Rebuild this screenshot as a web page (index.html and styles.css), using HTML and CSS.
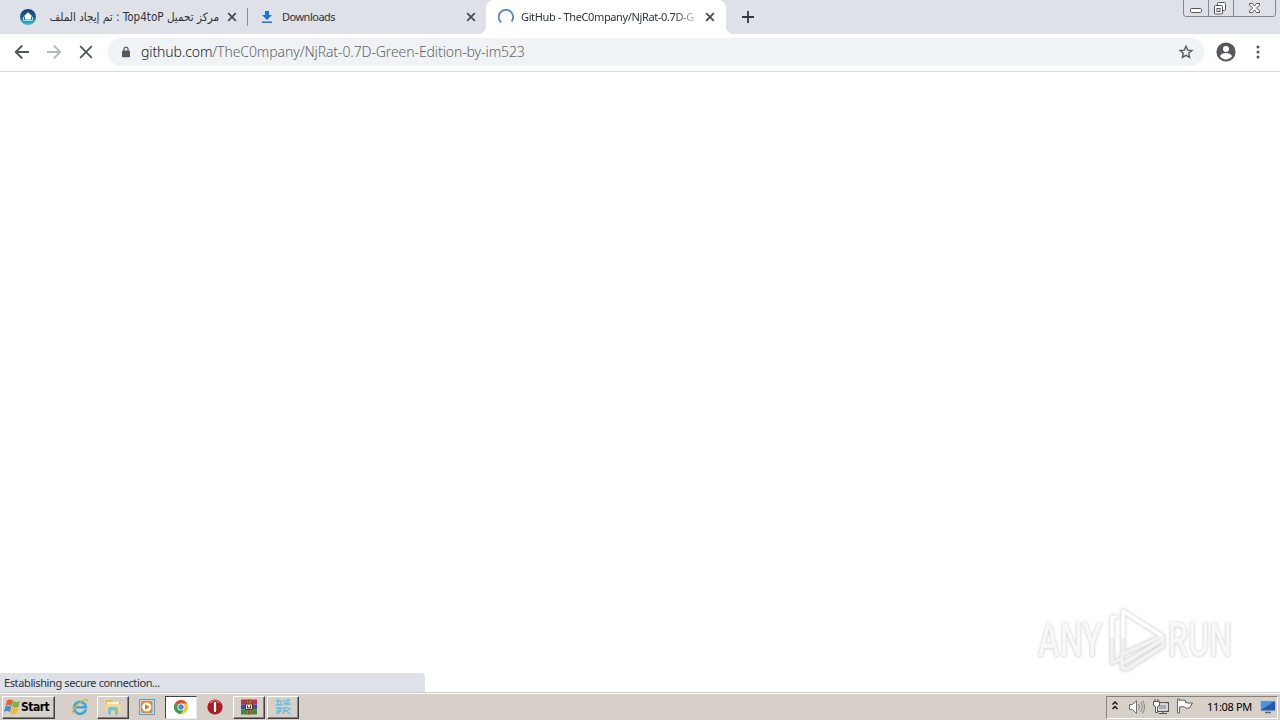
FILE: index.html
```html
<!DOCTYPE html>
<html lang="en">
<head>
<meta charset="utf-8">
<title>GitHub - TheC0mpany/NjRat-0.7D-Green-Edition-by-im523</title>
<link rel="stylesheet" href="styles.css">
</head>
<body>
<div class="screen">
  <header class="tabs">
    <div class="tab tab-first">
      <svg class="fav" viewBox="0 0 16 16"><defs><linearGradient id="fg" x1="0" y1="0" x2="0" y2="1"><stop offset="0" stop-color="#153d70"/><stop offset=".5" stop-color="#1b6090"/><stop offset="1" stop-color="#42c3cf"/></linearGradient></defs><circle cx="8" cy="8" r="8" fill="url(#fg)"/><path d="M8 3.300 12.500 7.500H11V10.500H5V7.500H3.500z" fill="#fff"/><path d="M3.500 8v3.500h9V8" fill="none" stroke="#a8dce8" stroke-width="1"/></svg>
      <span class="title title-ar" dir="rtl">مركز تحميل Top4toP : تم إيجاد الملف</span>
      <svg class="close" viewBox="0 0 10 10"><path d="M1.2 1.2l7.6 7.6M8.8 1.2 1.2 8.8"/></svg>
    </div>
    <div class="tab tab-second">
      <svg class="fav" viewBox="0 0 16 16"><path d="M6 2h4v4h3L8 11 3 6h3zM3 12.4h10v1.6H3z" fill="#1a73d8"/></svg>
      <span class="title title-dl">Downloads</span>
      <svg class="close" viewBox="0 0 10 10"><path d="M1.2 1.2l7.6 7.6M8.8 1.2 1.2 8.8"/></svg>
    </div>
    <div class="tab tab-active">
      <svg class="fav" viewBox="0 0 16 16"><path d="M3.2 13.5A7.2 7.2 0 1 1 13.6 12.5" fill="none" stroke="#5d84c4" stroke-width="1.8"/></svg>
      <span class="title title-gh">GitHub - TheC0mpany/NjRat-0.7D-G</span>
      <svg class="close" viewBox="0 0 10 10"><path d="M1.2 1.2l7.6 7.6M8.8 1.2 1.2 8.8"/></svg>
    </div>
    <svg class="plus" viewBox="0 0 12 12"><path d="M6 0v12M0 6h12" stroke="#34373b" stroke-width="1.8"/></svg>
    <div class="controls">
      <svg viewBox="0 0 93 17"><path d="M.5 0V14Q.5 16.500 3 16.500H90Q92.500 16.500 92.500 14V0M25.500 0V16M50.500 0V16" fill="none" stroke="#85888f"/><g fill="#fff" stroke="#54575e"><rect x="7.500" y="8.500" width="11" height="4" rx="1"/><rect x="34.500" y="2.500" width="8" height="8" rx="1"/><rect x="31.500" y="5.500" width="8" height="8.500" rx="1"/><rect x="34" y="8.500" width="3" height="3"/><path d="M66.500 3.500h3l2 2.500 2-2.500h3v1.500l-3 3 3 3v1.500h-3l-2-2.500-2 2.500h-3V11l3-3-3-3z"/></g></svg>
    </div>
  </header>

  <nav class="toolbar">
    <svg class="nav" viewBox="0 0 16 16"><path d="M15 8H2M8.200 1.500 1.700 8l6.500 6.500" stroke="#505357"/></svg>
    <svg class="nav" viewBox="0 0 16 16"><path d="M1 8h13M7.800 1.500 14.300 8l-6.500 6.500" stroke="#b7b9bb"/></svg>
    <svg class="nav" viewBox="0 0 16 16"><path d="M2.200 2.200l11.600 11.600M13.800 2.200 2.200 13.800" stroke="#505357"/></svg>
    <div class="address">
      <svg class="lock" viewBox="0 0 10 12"><rect x="1" y="4.500" width="8" height="6.700" rx="1" fill="#55585c"/><path d="M3 5V3.200a2 2 0 0 1 4 0V5" fill="none" stroke="#55585c" stroke-width="1.200"/></svg>
      <span class="url"><span class="host">github.com</span>/TheC0mpany/NjRat-0.7D-Green-Edition-by-im523</span>
      <svg class="star" viewBox="0 0 16 16"><path d="M8 2.200l1.700 3.900 4.200.4-3.200 2.800.9 4.100L8 11.300l-3.600 2.100.9-4.100-3.200-2.800 4.200-.4z" fill="none" stroke="#55585c" stroke-width="1.400"/></svg>
    </div>
    <svg class="avatar" viewBox="0 0 20 20"><circle cx="10" cy="10" r="9.600" fill="#54575b"/><circle cx="10" cy="7" r="3" fill="#fff"/><path d="M4 14.200c.8-2 3.600-3.100 6-3.100s5.200 1.100 6 3.100a7.200 7.200 0 0 1-12 0z" fill="#fff"/></svg>
    <svg class="dots" viewBox="0 0 4 14"><g fill="#505357"><circle cx="2" cy="2" r="1.500"/><circle cx="2" cy="7" r="1.500"/><circle cx="2" cy="12" r="1.500"/></g></svg>
  </nav>

  <main class="page">
    <div class="status">Establishing secure connection...</div>
    <div class="watermark">
      <span class="mark mark-any">ANY</span>
      <svg class="play" viewBox="0 0 58 64"><g fill="none" stroke-linejoin="round"><path d="M9 8 4 10v45l9-4M15 3v43L54 28z M14 46v14l5 1 36-23V29M16 55 54 32" stroke="#e6e6e6" stroke-width="4.500"/><path d="M9 8 4 10v45l9-4M15 3v43L54 28z M14 46v14l5 1 36-23V29M16 55 54 32" stroke="#f3f3f3" stroke-width="2.800"/><path d="M9 8 4 10v20M15 30V3l39 25" stroke="#fff" stroke-width="3.400"/></g></svg>
      <span class="mark mark-run">RUN</span>
    </div>
  </main>

  <footer class="taskbar">
    <div class="start">
      <svg class="flag" viewBox="0 0 18 16"><path d="M4 1.500q3-2 6 0L8.500 7q-3-2-6 0z" fill="#e9602c"/><path d="M10.500 2q3 2 6.500 0L15.500 7.500q-3 2-6.500 0z" fill="#75b743"/><path d="M2.300 7.700q3-2 6 0L7 13q-3-2-6 0z" fill="#3b8ed8"/><path d="M8.800 8.300q3 2 6.500 0L14 14q-3 2-6.500 0z" fill="#f5b82e"/></svg>
      <span class="start-label">Start</span>
    </div>
    <div class="task task-ie"><svg viewBox="0 0 18 18"><path d="M14.800 11.500A6 6 0 1 1 15 9.300H4" fill="none" stroke="#3ba7df" stroke-width="2.600"/><path d="M2 15.500C-.5 14 5 6.500 11 3c4-2.300 6-2 5.500.8" fill="none" stroke="#e3b52e" stroke-width="1.300"/></svg></div>
    <div class="task raised"><svg viewBox="0 0 18 18"><path d="M2 2h6l1 2h7v10H2z" fill="#e5c25c"/><path d="M3 4h12v3H3z" fill="#fff6c6"/><path d="M1.500 6h15v9h-15z" fill="#f3da85"/><path d="M4 16.500V11q0-2 2-2h6q2 0 2 2v5.500h-3v-4H7v4z" fill="#79bddd"/></svg></div>
    <div class="task"><svg viewBox="0 0 18 18"><rect x="1.500" y="1.500" width="15" height="15" fill="#b9d9ed" stroke="#5c9fc8"/><rect x="3" y="3" width="11.500" height="12" rx="2" fill="#ef8421"/><circle cx="8.700" cy="9" r="4.600" fill="#fff"/><path d="M7 6.200 11.700 9 7 11.800z" fill="#e36e16"/></svg></div>
    <div class="task pressed"><svg viewBox="0 0 18 18"><circle cx="9" cy="9" r="7" fill="#f5c52d"/><path d="M9 9 2.900 5.500A7 7 0 0 1 15.100 5.500H9z" fill="#df4938"/><path d="M9 9 2.900 5.500A7 7 0 0 0 9 16l3-5.500z" fill="#3a9d55"/><circle cx="9" cy="9" r="3.600" fill="#fff"/><circle cx="9" cy="9" r="2.700" fill="#4787e8"/></svg></div>
    <div class="task"><svg viewBox="0 0 18 18"><circle cx="9" cy="9" r="7.600" fill="#b51820"/><path d="M3 5.500a7 7 0 0 1 12 0q-6-2-12 0z" fill="#d86b69"/><rect x="7.200" y="3.500" width="3.600" height="11" rx="1.600" fill="#fff" stroke="#7d0b10"/></svg></div>
    <div class="task raised"><svg viewBox="0 0 18 18"><path d="M1 1.500h16v5H1z" fill="#b5364a"/><path d="M1 6.500h16v5H1z" fill="#3b4fa4"/><path d="M1 11.500h16v5H1z" fill="#3f8b3d"/><path d="M7 1h4v16H7z" fill="#bb713a"/><path d="M5.500 6h7v5.500h-7z" fill="#eee6cf" stroke="#5a3424"/><path d="M7.500 7.500v2.500h3V7.500M9 2v3M9 12.500v3" fill="none" stroke="#4e3426"/></svg></div>
    <div class="task raised"><svg viewBox="0 0 18 18"><g fill="none" stroke="#65bfe0" stroke-width="1.300"><path d="M2 3h5v4H2M4 1v7M9 2l3 2-3 3M12 2h4M14 2v5M11 6h6M2 10h5v3H3v3M5 9v7M8 10h3l-2 6M12 9l4 2-4 2 5 3M9 13h4"/></g></svg></div>
    <div class="tray">
      <svg class="chev" viewBox="0 0 8 10"><path d="M1.500 3.500 4 1l2.500 2.500M1.500 8 4 5.500 6.500 8" fill="none" stroke="#111" stroke-width="1.400"/></svg>
      <svg class="ti" viewBox="0 0 18 18"><path d="M1.500 6.500h3l4-4v13l-4-4h-3z" fill="#fff" stroke="#707070"/><path d="M10.500 6q2 3 0 6M12.500 4q3.500 5 0 10M14.500 2.500q4 6.500 0 13" fill="none" stroke="#858585"/></svg>
      <svg class="ti" viewBox="0 0 18 18"><rect x="4.500" y="4.500" width="12" height="9" fill="#aaa" stroke="#555"/><path d="M6 6h9v6H6z" fill="#aaa" stroke="#fff"/><path d="M7 15.500h8M11 13.500v2" stroke="#555"/><path d="M1.500 3.500h6v4l-2 1v6h-2v-6l-2-1zM3 1v2.500M6 1v2.500" fill="#fff" stroke="#555"/></svg>
      <svg class="ti" viewBox="0 0 18 18"><path d="M3.500 2.500q3-1 6 0v2q3 1 7 .5l-3 5q-3 1-5-1-2-1-5 0v6h-2v-14h2z" fill="#fff" stroke="#606060"/></svg>
      <span class="clock">11:08 PM</span>
      <svg class="desk" viewBox="0 0 16 14"><rect x=".5" y="1" width="15" height="10" fill="#2658ae" stroke="#b5c8de"/><path d="M1 10V2h12z" fill="#4b91dc"/><path d="M5 12.500h6" stroke="#556581" stroke-width="1.500"/></svg>
    </div>
  </footer>
</div>
</body>
</html>
```
FILE: styles.css
```css
* { box-sizing: border-box; }
body { margin: 0; font-family: "DejaVu Sans Condensed", "DejaVu Sans", sans-serif; }
svg { display: block; flex: none; }
.screen { width: 1280px; height: 720px; display: flex; flex-direction: column; overflow: hidden; background: #fff; }

.tabs { height: 34px; flex: none; display: flex; background: #dee1e8; }
.tab { height: 34px; display: flex; align-items: center; flex: none; }
.tab-first { width: 248px; padding-left: 20px; background: linear-gradient(#888b91, #888b91) right 8px / 1px 18px no-repeat; }
.tab-second { width: 238px; padding-left: 11px; }
.tab-active { width: 240px; padding-left: 12px; background: #fff; border-radius: 8px 8px 0 0; position: relative; }
.tab-active::before, .tab-active::after { content: ""; position: absolute; bottom: 0; width: 7px; height: 7px; }
.tab-active::before { left: -7px; background: radial-gradient(circle at 0 0, transparent 6.5px, #fff 7px); }
.tab-active::after { right: -7px; background: radial-gradient(circle at 100% 0, transparent 6.5px, #fff 7px); }
.fav { width: 16px; height: 16px; }
.title { font-family: "Noto Sans", "DejaVu Sans", sans-serif; font-size: 11px; line-height: 18px; color: #303338; white-space: nowrap; flex: none; }
.title-ar { width: 171px; margin: 0 8px 0 12px; font-family: "DejaVu Sans Condensed", "DejaVu Sans", sans-serif; font-size: 11.6px; }
.title-dl { width: 177px; margin: 0 7px; letter-spacing: -.5px; }
.title-gh { width: 176px; margin: 0 8px 0 7px; letter-spacing: -.37px; -webkit-mask-image: linear-gradient(90deg, #000 154px, transparent 180px); mask-image: linear-gradient(90deg, #000 154px, transparent 180px); }
.close { width: 10px; height: 10px; fill: none; stroke: #45484d; stroke-width: 1.7; }
.plus { width: 12px; height: 12px; margin: 11px 0 0 16px; }
.controls { width: 93px; height: 17px; margin: 0 4px 0 auto; }

.toolbar { height: 38px; flex: none; display: flex; align-items: center; padding: 0 20px 2px 14px; border-bottom: 1px solid #d9dadc; background: #fff; }
.nav { width: 16px; height: 16px; margin-right: 16px; fill: none; stroke-width: 1.8; }
.address { width: 1096px; height: 28px; margin-left: -2px; padding: 0 10px 0 13px; border-radius: 14px; background: #f0f3f5; display: flex; align-items: center; }
.lock { width: 10px; height: 12px; }
.url { margin-left: 10px; font-family: "Noto Sans", sans-serif; font-size: 14px; font-weight: 300; line-height: 20px; letter-spacing: -.1px; color: #5f6368; white-space: nowrap; }
.host { color: #202124; }
.star { width: 16px; height: 16px; margin-left: auto; }
.avatar { width: 20px; height: 20px; margin-left: 12px; }
.dots { width: 4px; height: 14px; margin-left: 20px; }

.page { flex: 1; display: flex; align-items: flex-end; justify-content: space-between; min-height: 0; }
.status { width: 425px; height: 19px; padding-left: 4px; background: #dee1e8; border-top-right-radius: 4px; font-family: "Noto Sans", sans-serif; font-size: 11px; line-height: 20px; letter-spacing: -.38px; color: #303338; }
.watermark { height: 64px; margin: 0 45px 20px 0; display: flex; align-items: center; }
.mark { display: inline-block; font-family: Roboto, "Liberation Sans", sans-serif; font-size: 48px; font-weight: 500; line-height: 60px; white-space: nowrap; color: #f8f8f8; text-shadow: 0 0 2px #c9c9c9, 0 1px 4px #dedede; transform-origin: left center; }
.mark-any { width: 66px; transform: scaleX(.68); }
.mark-run { width: 67px; transform: scaleX(.67); }
.play { width: 58px; height: 64px; margin: 0 2px 0 4px; filter: drop-shadow(0 0 1.5px #ccc); }

.taskbar { height: 28px; flex: none; border-top: 1px solid #cfd0c9; box-shadow: inset 0 1px #fff; background: #d6d0c8; display: flex; align-items: center; padding: 3px 2px 1px; }
.start, .raised { border: 1px solid; border-color: #fff #404040 #404040 #fff; box-shadow: inset -1px -1px #858079; }
.start { width: 53px; height: 23px; display: flex; align-items: center; padding: 0 0 2px; margin-right: 9px; }
.flag { width: 18px; height: 16px; }
.start-label { font: bold 12px/18px "DejaVu Sans Condensed", "DejaVu Sans", sans-serif; color: #000; letter-spacing: -.5px; }
.task { width: 32px; height: 23px; margin-right: 2px; padding-bottom: 2px; display: flex; align-items: center; justify-content: center; flex: none; }
.task-ie { width: 31px; }
.task svg { width: 18px; height: 18px; }
.pressed { background: #fff; border: 1px solid; border-color: #404040 #eee #eee #404040; }
.tray { width: 172px; height: 23px; margin-left: auto; border: 1px solid; border-color: #858079 #fff #fff #858079; display: flex; align-items: center; padding: 0 0 1px 4px; }
.chev { width: 8px; height: 10px; margin: 0 9px 3px 0; }
.ti { width: 18px; height: 18px; margin-right: 6px; }
.clock { width: 48px; margin: 0 5px 0 7px; font-family: "Noto Sans", sans-serif; font-size: 11px; line-height: 18px; letter-spacing: -.35px; color: #000; white-space: nowrap; }
.desk { width: 16px; height: 14px; }
```
